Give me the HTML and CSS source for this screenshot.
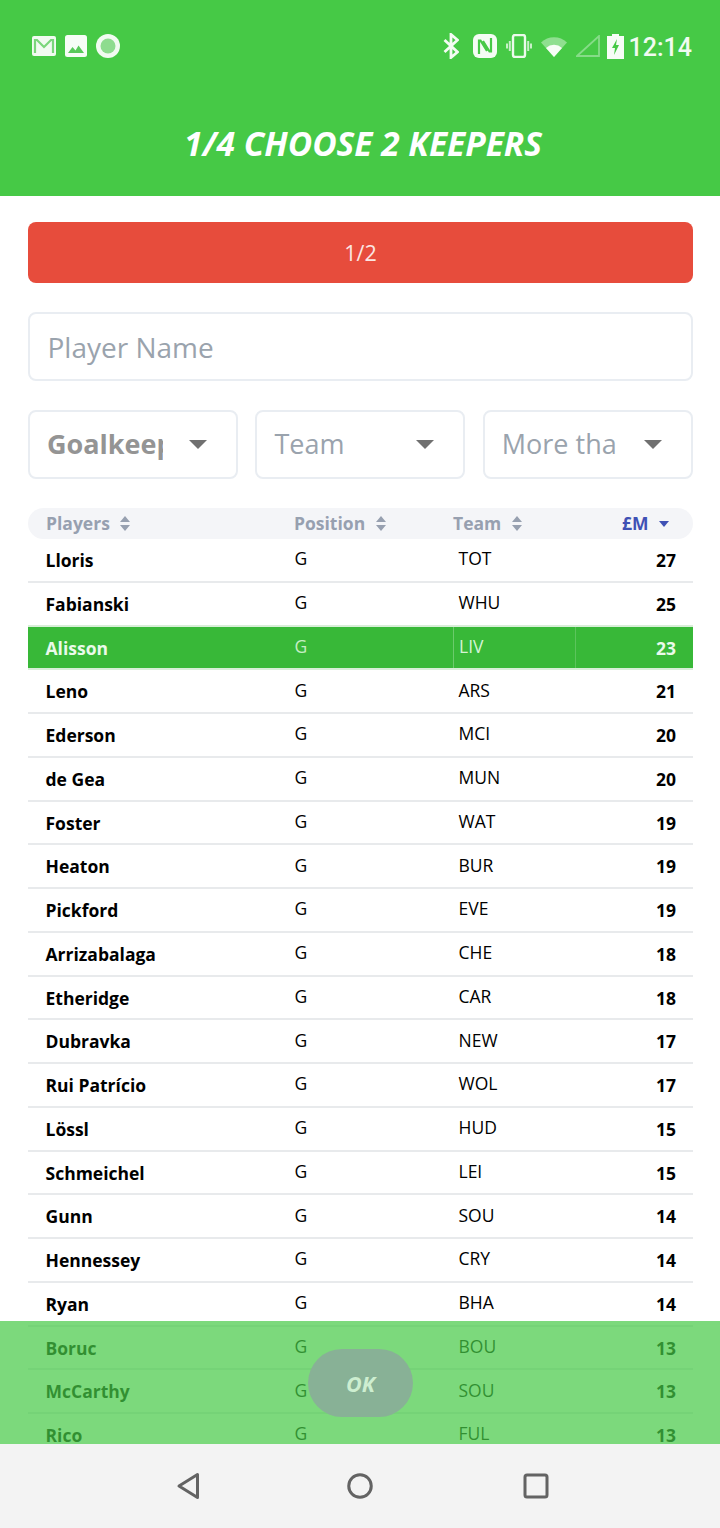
FILE: index.html
```html
<!DOCTYPE html>
<html lang="en">
<head>
<meta charset="utf-8">
<title>Choose 2 keepers</title>
<link rel="stylesheet" href="styles.css">
</head>
<body>
<div class="app">
  <header class="top">
    <div class="status">
      <div class="status-left">
        <svg class="i-mail" viewBox="0 0 24 20"><rect width="24" height="20" rx="2" fill="#f1fbf1"/><path d="M3 17V4h2l7 7 7-7h2v13" fill="none" stroke="#7ad67b" stroke-width="2.2"/></svg>
        <svg class="i-pic" viewBox="0 0 22 22"><rect width="22" height="22" rx="2.5" fill="#f6fdf6"/><path d="M3 18l4.500-6 3 3.500 3-5 5.500 7.500z" fill="#58c95a"/></svg>
        <svg class="i-rec" viewBox="0 0 24 24"><circle cx="12" cy="12" r="12" fill="#f1fbf1"/><circle cx="12" cy="12" r="7.5" fill="#8edc8f"/></svg>
      </div>
      <div class="status-right">
        <svg class="i-bt" viewBox="0 0 16 26"><path d="M1.500 7l13 12-6.500 5.500V1.500L14.500 7l-13 12" fill="none" stroke="#f4fcf4" stroke-width="2.800"/></svg>
        <svg class="i-nfc" viewBox="0 0 24 24"><rect width="24" height="24" rx="6" fill="#f4fcf4"/><path d="M6 20V6.500h1.500L14 17M18 4v13.500h-1.500L10 7" fill="none" stroke="#46c946" stroke-width="2.200"/></svg>
        <svg class="i-vib" viewBox="0 0 26 24"><rect x="7" y="1" width="12" height="22" rx="2" fill="none" stroke="#ecfaec" stroke-width="2.400"/><path d="M3.800 7v10M1 9.500v5M22.200 7v10M25 9.500v5" stroke="#c8f0c8" stroke-width="2"/></svg>
        <svg class="i-wifi" viewBox="0 0 26 21"><path d="M0 6.500a19 19 0 0 1 26 0L13 21z" fill="#8fdf90"/><path d="M5 11.900a12 12 0 0 1 16 0L13 21z" fill="#f7fdf7"/></svg>
        <svg class="i-sig" viewBox="0 0 24 22"><path d="M1 21L23 1v20z" fill="none" stroke="#86dc88" stroke-width="1.800"/></svg>
        <svg class="i-bat" viewBox="0 0 17 25"><path d="M5 0h7v2h5v23H0V2h5z" fill="#f7fdf7"/><path d="M10 5l-5 9h3l-1 7 5-10H9z" fill="#46c946"/></svg>
        <span class="clock">12:14</span>
      </div>
    </div>
    <h1 class="title">1/4 CHOOSE 2 KEEPERS</h1>
  </header>

  <main class="content">
    <div class="progress">1/2</div>
    <div class="field search">Player Name</div>
    <div class="filters">
      <div class="field select"><span class="sel-text strong">Goalkeeper</span><span class="caret"></span></div>
      <div class="field select"><span class="sel-text">Team</span><span class="caret"></span></div>
      <div class="field select"><span class="sel-text">More than</span><span class="caret"></span></div>
    </div>

    <div class="thead">
      <div class="th th-name">Players <svg class="sort" viewBox="0 0 12 15"><path d="M6 0l5 6H1zM6 15l5-6H1z"/></svg></div>
      <div class="th th-pos">Position <svg class="sort" viewBox="0 0 12 15"><path d="M6 0l5 6H1zM6 15l5-6H1z"/></svg></div>
      <div class="th th-team">Team <svg class="sort" viewBox="0 0 12 15"><path d="M6 0l5 6H1zM6 15l5-6H1z"/></svg></div>
      <div class="th th-val">£M <svg class="sort-down" viewBox="0 0 12 6"><path d="M1 0h10L6 6z"/></svg></div>
    </div>

    <div class="rows">
      <div class="row"><div class="c-name">Lloris</div><div class="c-pos">G</div><div class="c-team">TOT</div><div class="c-val">27</div></div>
      <div class="row before-sel"><div class="c-name">Fabianski</div><div class="c-pos">G</div><div class="c-team">WHU</div><div class="c-val">25</div></div>
      <div class="row selected"><div class="c-name">Alisson</div><div class="c-pos">G</div><div class="c-team">LIV</div><div class="c-val">23</div></div>
      <div class="row"><div class="c-name">Leno</div><div class="c-pos">G</div><div class="c-team">ARS</div><div class="c-val">21</div></div>
      <div class="row"><div class="c-name">Ederson</div><div class="c-pos">G</div><div class="c-team">MCI</div><div class="c-val">20</div></div>
      <div class="row"><div class="c-name">de Gea</div><div class="c-pos">G</div><div class="c-team">MUN</div><div class="c-val">20</div></div>
      <div class="row"><div class="c-name">Foster</div><div class="c-pos">G</div><div class="c-team">WAT</div><div class="c-val">19</div></div>
      <div class="row"><div class="c-name">Heaton</div><div class="c-pos">G</div><div class="c-team">BUR</div><div class="c-val">19</div></div>
      <div class="row"><div class="c-name">Pickford</div><div class="c-pos">G</div><div class="c-team">EVE</div><div class="c-val">19</div></div>
      <div class="row"><div class="c-name">Arrizabalaga</div><div class="c-pos">G</div><div class="c-team">CHE</div><div class="c-val">18</div></div>
      <div class="row"><div class="c-name">Etheridge</div><div class="c-pos">G</div><div class="c-team">CAR</div><div class="c-val">18</div></div>
      <div class="row"><div class="c-name">Dubravka</div><div class="c-pos">G</div><div class="c-team">NEW</div><div class="c-val">17</div></div>
      <div class="row"><div class="c-name">Rui Patrício</div><div class="c-pos">G</div><div class="c-team">WOL</div><div class="c-val">17</div></div>
      <div class="row"><div class="c-name">Lössl</div><div class="c-pos">G</div><div class="c-team">HUD</div><div class="c-val">15</div></div>
      <div class="row"><div class="c-name">Schmeichel</div><div class="c-pos">G</div><div class="c-team">LEI</div><div class="c-val">15</div></div>
      <div class="row"><div class="c-name">Gunn</div><div class="c-pos">G</div><div class="c-team">SOU</div><div class="c-val">14</div></div>
      <div class="row"><div class="c-name">Hennessey</div><div class="c-pos">G</div><div class="c-team">CRY</div><div class="c-val">14</div></div>
      <div class="row"><div class="c-name">Ryan</div><div class="c-pos">G</div><div class="c-team">BHA</div><div class="c-val">14</div></div>
      <div class="row"><div class="c-name">Boruc</div><div class="c-pos">G</div><div class="c-team">BOU</div><div class="c-val">13</div></div>
      <div class="row"><div class="c-name">McCarthy</div><div class="c-pos">G</div><div class="c-team">SOU</div><div class="c-val">13</div></div>
      <div class="row"><div class="c-name">Rico</div><div class="c-pos">G</div><div class="c-team">FUL</div><div class="c-val">13</div></div>
    </div>

    <div class="ok-bar"><button class="ok" type="button">OK</button></div>
  </main>

  <nav class="nav">
    <svg class="nav-back" viewBox="0 0 24 28"><path d="M21.500 2.500v23L3 14z" fill="none" stroke="#636363" stroke-width="3" stroke-linejoin="round"/></svg>
    <svg class="nav-home" viewBox="0 0 26 26"><circle cx="13" cy="13" r="11.250" fill="none" stroke="#636363" stroke-width="3"/></svg>
    <svg class="nav-rec" viewBox="0 0 26 26"><rect x="2" y="2" width="22" height="22" rx="2" fill="none" stroke="#636363" stroke-width="3"/></svg>
  </nav>
</div>
</body>
</html>
```
FILE: styles.css
```css
* { box-sizing: border-box; }
html, body { margin: 0; padding: 0; }
body { width: 720px; height: 1528px; overflow: hidden; background: #fff; font-family: "Open Sans", "Noto Sans", sans-serif; }
.app { width: 720px; height: 1528px; display: flex; flex-direction: column; }

.top { height: 196px; flex: none; background: #46c946; color: #fff; }
.status { height: 92px; display: flex; justify-content: space-between; align-items: center; padding: 0 28px 0 32px; }
.status-left, .status-right { display: flex; align-items: center; }
.i-mail { width: 24px; height: 20px; }
.i-pic { width: 22px; height: 22px; margin-left: 9px; }
.i-rec { width: 24px; height: 24px; margin-left: 9px; }
.i-bt { width: 16px; height: 26px; }
.i-nfc { width: 24px; height: 24px; margin-left: 14px; }
.i-vib { width: 26px; height: 24px; margin-left: 9px; }
.i-wifi { width: 26px; height: 21px; margin-left: 9px; }
.i-sig { width: 24px; height: 22px; margin-left: 9px; }
.i-bat { width: 17px; height: 25px; margin-left: 7px; }
.clock { font-family: Roboto, sans-serif; font-weight: 500; font-size: 25px; line-height: 30px; margin-left: 5px; padding-top: 3px; color: #f1fbf1; }
.title { margin: 0; height: 104px; padding: 0 0 0 6px; text-align: center; font-size: 33.500px; line-height: 103px; font-weight: 700; font-style: italic; }

.content { position: relative; flex: 1; min-height: 0; overflow: hidden; padding: 26px 27px 0 28px; }
.progress { height: 61px; border-radius: 8px; background: #e74c3c; color: #fbe6e3; font-size: 21.500px; line-height: 61px; text-align: center; }
.field { background: #fff; border: 2px solid #e9edf2; border-radius: 8px; height: 69px; color: #9aa3ad; }
.search { margin-top: 29px; padding-left: 17.500px; font-size: 28px; line-height: 66px; }
.filters { display: grid; grid-template-columns: repeat(3, 210px); column-gap: 17.400px; margin-top: 29px; }
.select { display: flex; align-items: center; padding: 0 29px 3px 17px; }
.sel-text { flex: 1; min-width: 0; overflow: hidden; white-space: nowrap; font-size: 27px; margin-right: 26px; }
.sel-text.strong { font-weight: 700; color: #949494; }
.caret { flex: none; width: 0; height: 0; margin-top: 3px; border-left: 9px solid transparent; border-right: 9px solid transparent; border-top: 9px solid #707070; }

.thead { display: grid; grid-template-columns: 261px 164px 122px 118px; align-items: center; height: 31px; margin-top: 29px; padding-bottom: 2px; border-radius: 16px; background: #f4f5f8; color: #97a0b0; font-size: 17.500px; font-weight: 700; }
.th { white-space: nowrap; }
.th-name { padding-left: 18px; }
.th-pos { padding-left: 5px; }
.th-val { text-align: right; padding-right: 23px; color: #3f51b5; }
.sort { width: 12px; height: 15px; margin-left: 5px; fill: #97a0b0; vertical-align: -1px; }
.sort-down { width: 12px; height: 6px; margin-left: 5px; fill: #3f51b5; vertical-align: 3px; }

.row { display: grid; grid-template-columns: 261px 164px 122px 118px; align-items: center; height: 43.750px; border-bottom: 2px solid #e8eaec; font-size: 17.500px; color: #000; }
.row.before-sel { border-bottom-color: #d8eed8; }
.c-name { padding: 0.500px 0 0 17.500px; font-weight: 700; }
.c-pos { padding: 0 0 3px 5.500px; }
.c-team { padding: 0 0 3px 5.500px; }
.c-val { text-align: right; padding: 0.500px 17px 0 0; font-weight: 700; }
.row.selected { background: #38b838; color: #e4f7e4; border-bottom-color: #d8eed8; }
.row.selected .c-name, .row.selected .c-val { color: #eafaea; }
.row.selected .c-pos { color: #c5eec5; }
.row.selected .c-team { color: #d5f3d5; align-self: stretch; display: flex; align-items: center; border-left: 1px solid #6ccb6c; padding-left: 5px; }
.row.selected .c-val { align-self: stretch; display: flex; align-items: center; justify-content: flex-end; border-left: 1px solid #5cc45c; }

.ok-bar { position: absolute; left: 0; right: 0; bottom: 0; height: 123px; background: rgba(70, 201, 70, 0.71); display: flex; justify-content: center; padding: 28px 0 0 1px; }
.ok { width: 105px; height: 68px; border: 0; border-radius: 34px; background: #88b196; color: #cdeed0; font-family: inherit; font-size: 21.500px; font-weight: 700; font-style: italic; padding: 0; }

.nav { height: 84px; flex: none; background: #f3f3f3; display: flex; align-items: center; }
.nav-back { width: 24px; height: 28px; margin-left: 176px; }
.nav-home { width: 26px; height: 26px; margin-left: 147px; }
.nav-rec { width: 26px; height: 26px; margin-left: 150px; }
```
